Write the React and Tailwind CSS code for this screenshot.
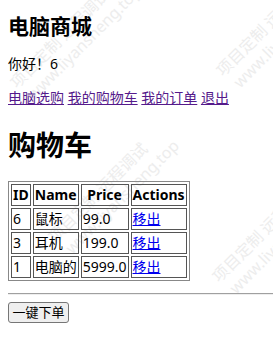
import React from "react";

const rows = [
  { id: "6", name: "鼠标", price: "99.0" },
  { id: "3", name: "耳机", price: "199.0" },
  { id: "1", name: "电脑的", price: "5999.0" },
];

function Mark({ className }) {
  return (
    <div
      className={
        "pointer-events-none absolute origin-top-left -rotate-45 whitespace-nowrap text-[16px] leading-[20px] text-[#ededed] " +
        className
      }
    >
      <div>项目定制 远程调试</div>
      <div className="pl-[4px]">www.liyansheng.top</div>
    </div>
  );
}

export default function App() {
  const font = { fontFamily: '"Noto Sans", "Noto Sans CJK SC", sans-serif' };
  return (
    <div
      className="relative h-[349px] w-[273px] overflow-hidden bg-white text-black"
      style={font}
    >
      <Mark className="left-[6px] top-[78px]" />
      <Mark className="left-[212px] top-[66px]" />
      <Mark className="left-[44px] top-[232px]" />
      <Mark className="left-[208px] top-[272px]" />

      <div className="relative pl-2 pt-[14px]">
        <h2 className="text-[21px] font-bold leading-[24px]">电脑商城</h2>
        <p className="mt-[16px] text-[14px] leading-[20px]">你好！6</p>
        <p className="mt-[14px] text-[14px] leading-[20px]">
          <a href="#" className="text-[#551a8b] underline">电脑选购</a>{" "}
          <a href="#" className="text-[#551a8b] underline">我的购物车</a>{" "}
          <a href="#" className="text-[#551a8b] underline">我的订单</a>{" "}
          <a href="#" className="text-[#551a8b] underline">退出</a>
        </p>
        <h1 className="mt-[20px] text-[28px] font-bold leading-[34px]">购物车</h1>
        <table className="mt-[19px] border-separate border-spacing-[2px] border border-[#888] text-[14px] leading-[18px]">
          <thead>
            <tr>
              {["ID", "Name", "Price", "Actions"].map((h) => (
                <th key={h} className="border border-[#555] p-[1px] text-center font-bold">
                  {h}
                </th>
              ))}
            </tr>
          </thead>
          <tbody>
            {rows.map((r) => (
              <tr key={r.id}>
                <td className="border border-[#555] p-[1px]">{r.id}</td>
                <td className="border border-[#555] p-[1px]">{r.name}</td>
                <td className="border border-[#555] p-[1px]">{r.price}</td>
                <td className="border border-[#555] p-[1px]">
                  <a href="#" className="text-[#0000ee] underline">移出</a>
                </td>
              </tr>
            ))}
          </tbody>
        </table>
        <div className="mt-[12px] border-t border-b border-t-[#a0a0a0] border-b-[#eeeeee]" />
        <div className="mt-[7px] flex">
          <button className="flex h-[21px] w-[61px] items-center justify-center rounded-[3px] border border-[#767676] bg-[#efefef] text-[13px] leading-[19px]">
            一键下单
          </button>
        </div>
      </div>
    </div>
  );
}
